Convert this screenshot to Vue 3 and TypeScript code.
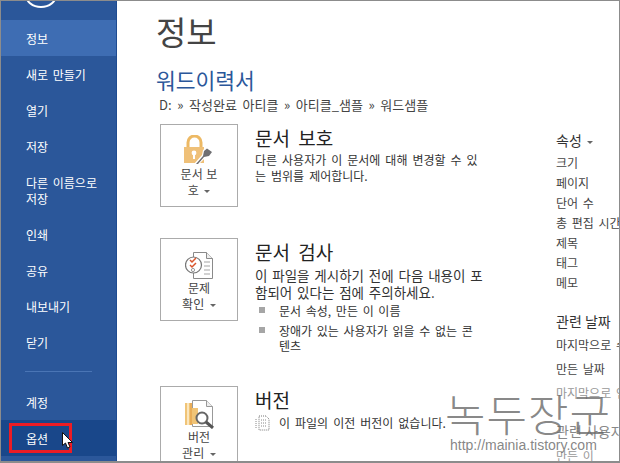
<script setup lang="ts">
const navTop = [
  { label: '정보', active: true },
  { label: '새로 만들기' },
  { label: '열기' },
  { label: '저장' },
  { label: '다른 이름으로\n저장', tall: true },
  { label: '인쇄' },
  { label: '공유' },
  { label: '내보내기' },
  { label: '닫기' },
]
const props1 = ['크기', '페이지', '단어 수', '총 편집 시간', '제목', '태그', '메모']
</script>

<template>
  <div class="frame">
    <aside class="side">
      <div class="logo-zone"><span class="back"></span></div>
      <a
        v-for="n in navTop"
        :key="n.label"
        :class="['nav', { active: n.active, tall: n.tall }]"
      >{{ n.label }}</a>
      <div class="rule"></div>
      <a class="nav">계정</a>
      <a class="nav hover">
        옵션
        <span class="redbox"></span>
        <svg class="cursor" width="11" height="17" viewBox="0 0 11 17">
          <path d="M.5.5v13l3-2.500 2 5 2.500-1-2-4.500h4.500z" fill="#fff" stroke="#111" stroke-width="1" />
        </svg>
      </a>
    </aside>

    <main class="main">
      <h1 class="title">정보</h1>
      <div class="doc">워드이력서</div>
      <div class="path">D: » 작성완료 아티클 » 아티클_샘플 » 워드샘플</div>

      <div class="columns">
        <div class="center">
          <section class="block first">
            <button class="tile">
              <svg class="ico" width="30" height="30" viewBox="0 0 30 30">
                <path d="M4 13V7.500a6.500 6.500 0 0 1 13 0V13" fill="none" stroke="#edb964" stroke-width="3" />
                <rect x="0" y="12" width="20" height="16" fill="#efc078" />
                <circle cx="10" cy="18" r="2.400" fill="#fff" />
                <rect x="9" y="18" width="2" height="6" fill="#fff" />
                <path d="M10 29l8-9 1-5 4-3 6 5-3 5-5 1-7 7z" fill="#fff" />
                <path d="M12 29l7-8 1-5 3-2.500 5 3.500-3 4-5 1-6 7z" fill="#6f6f72" />
              </svg>
              <span>문서 보<br />호 <i class="caret"></i></span>
            </button>
            <div class="text">
              <h2>문서 보호</h2>
              <p>다른 사용자가 이 문서에 대해 변경할 수 있<br />는 범위를 제어합니다.</p>
            </div>
          </section>

          <section class="block second">
            <button class="tile">
              <svg class="ico" width="29" height="27" viewBox="0 0 29 27">
                <path d="M8.500.5h13l6 6v20h-19z" fill="#fff" stroke="#8a8a8a" />
                <path d="M21.500.5v6h6" fill="#eee" stroke="#8a8a8a" />
                <path d="M19 10h6M19 14h6M19 18h6M19 22h6" stroke="#a5a5a5" />
                <circle cx="8.500" cy="13" r="8" fill="#fff" stroke="#777" stroke-width="1.200" />
                <path d="M5 8l2 2 4-4M5 13l2 2 4-4" fill="none" stroke="#d9542b" stroke-width="1.500" />
                <circle cx="8" cy="18" r="1.600" fill="none" stroke="#999" />
              </svg>
              <span>문제<br />확인 <i class="caret"></i></span>
            </button>
            <div class="text">
              <h2>문서 검사</h2>
              <p class="big">이 파일을 게시하기 전에 다음 내용이 포<br />함되어 있다는 점에 주의하세요.</p>
              <ul>
                <li>문서 속성, 만든 이 이름</li>
                <li>장애가 있는 사용자가 읽을 수 없는 콘<br />텐츠</li>
              </ul>
            </div>
          </section>

          <section class="block third">
            <button class="tile">
              <svg class="ico" width="29" height="29" viewBox="0 0 29 29">
                <rect x="0" y="3" width="12" height="22" fill="#f0c477" />
                <rect x="2" y="3" width="2" height="22" fill="#fbe6bd" />
                <rect x="5" y="3" width="2" height="22" fill="#e9ad58" />
                <path d="M7.500.5h14l6 6v20h-20z" fill="#fff" stroke="#999" />
                <path d="M21.500.5v6h6" fill="#eee" stroke="#999" />
                <rect x="7" y="8" width="6" height="16" fill="#f0c477" />
                <circle cx="17" cy="18" r="5.500" fill="#fff" stroke="#666" stroke-width="2" />
                <path d="M21 22l7 6" stroke="#555" stroke-width="3" />
              </svg>
              <span>버전<br />관리 <i class="caret"></i></span>
            </button>
            <div class="text">
              <h2>버전</h2>
              <p class="ver">
                <svg width="16" height="16" viewBox="0 0 16 16">
                  <path d="M4 1h7l3 3v11H4z" fill="#fff" stroke="#777" stroke-dasharray="1 1" />
                  <path d="M6 5h6M6 8h6M6 11h6M1 4v10" stroke="#888" stroke-dasharray="1 1" />
                </svg>
                이 파일의 이전 버전이 없습니다.
              </p>
            </div>
          </section>
        </div>

        <div class="right">
          <h3>속성 <i class="caret"></i></h3>
          <div v-for="p in props1" :key="p" class="prop">{{ p }}</div>
          <h3 class="related">관련 날짜</h3>
          <div class="prop date">마지막으로 수정한 날짜</div>
          <div class="prop date">만든 날짜</div>
          <div class="prop date fade">마지막으로 인쇄한 날짜</div>
          <h3 class="people">관련 사용자</h3>
          <div class="prop fade">만든 이</div>
        </div>
      </div>
    </main>

    <div class="stamp">
      <span class="stamp-big">녹두장군</span>
      <span class="stamp-url">http://mainia.tistory.com</span>
    </div>
  </div>
</template>

<style>
html, body { margin: 0; background: #fff; overflow: hidden; }
</style>

<style scoped>
.frame {
  position: relative;
  display: flex;
  width: 620px;
  height: 463px;
  box-sizing: border-box;
  overflow: hidden;
  background: #fff;
  border: 1px solid #8c8c8c;
  border-bottom-width: 2px;
  font-family: "Noto Sans CJK KR", "Liberation Sans", sans-serif;
  color: #333;
}
.side {
  flex: 0 0 116px;
  display: flex;
  flex-direction: column;
  box-sizing: border-box;
  background: #2b579a;
  border-right: 1px solid #1e4b91;
  color: #fff;
}
.logo-zone { height: 19px; position: relative; overflow: hidden; flex: none; }
.back {
  position: absolute;
  left: 24px;
  top: -19px;
  width: 28px;
  height: 22px;
  border: 2px solid #fff;
  border-radius: 50%;
}
.nav {
  position: relative;
  display: flex;
  flex: none;
  align-items: center;
  box-sizing: border-box;
  height: 36px;
  padding: 2px 0 0 25px;
  font-size: 12px;
  line-height: 16px;
  word-spacing: 2px;
  white-space: pre-line;
}
.nav.tall { height: 52px; }
.nav.active { background: #3e6db3; }
.nav.hover { background: #19478a; }
.rule { flex: none; height: 1px; margin: 11px 24px 12px; background: #4a75b5; }
.redbox {
  position: absolute;
  left: 8px;
  top: 3px;
  width: 57px;
  height: 24px;
  border: 3px solid #ed1c24;
}
.cursor { position: absolute; left: 61px; top: 12px; }

.main { flex: 1; min-width: 0; padding: 6px 0 0 39px; overflow: hidden; }
.title {
  margin: 0;
  height: 48px;
  font-size: 33px;
  line-height: 48px;
  font-weight: 400;
  color: #444;
}
.doc {
  margin-top: 12px;
  height: 26px;
  font-size: 21.500px;
  line-height: 26px;
  color: #2b579a;
}
.path {
  height: 20px;
  margin: 2px 0 0 3px;
  font-size: 13px;
  line-height: 20px;
  word-spacing: 2.700px;
  color: #444;
}
.columns { display: flex; margin-top: 9px; }
.center { flex: 0 0 400px; padding-left: 4px; box-sizing: border-box; }
.block { display: flex; gap: 17px; }
.first { height: 114px; }
.second { height: 148px; }
.third { height: 100px; }
.tile {
  flex: 0 0 78px;
  box-sizing: border-box;
  height: 83px;
  padding: 10px 0 0;
  display: flex;
  flex-direction: column;
  align-items: center;
  gap: 1px;
  background: #fff;
  border: 1px solid #ababab;
  font: inherit;
  font-size: 12px;
  line-height: 16px;
  word-spacing: 1px;
  color: #444;
  text-align: center;
}
.second .tile { padding-top: 13px; gap: 1px; }
.third .tile { height: 100px; padding-top: 13px; gap: 0; }
.ico { flex: none; }
.caret {
  display: inline-block;
  width: 0;
  height: 0;
  margin: 0 0 2px 2px;
  border: 3px solid transparent;
  border-top: 3px solid #666;
  border-bottom: 0;
}
.text { flex: 1; min-width: 0; }
.text h2 {
  margin: 1px 0 0;
  font-size: 19px;
  line-height: 26px;
  word-spacing: 4px;
  font-weight: 400;
  color: #222;
}
.text p {
  margin: 1px 0 0;
  font-size: 12px;
  line-height: 16px;
  word-spacing: 2.300px;
  color: #333;
  white-space: nowrap;
}
.text p.big {
  margin-top: 2px;
  font-size: 13.500px;
  line-height: 17px;
  word-spacing: 1.800px;
}
.text ul { margin: 2px 0 0; padding: 0; list-style: none; }
.text li {
  position: relative;
  padding-left: 24px;
  font-size: 12px;
  line-height: 15px;
  word-spacing: 2px;
  margin-bottom: 5px;
  white-space: nowrap;
}
.text li::before {
  content: "";
  position: absolute;
  left: 4px;
  top: 4px;
  width: 6px;
  height: 6px;
  background: #a6a6a6;
}
.text p.ver { display: flex; align-items: center; gap: 8px; margin-top: 2px; }
.right { flex: none; width: 100px; white-space: nowrap; }
.right h3 {
  margin: 6px 0 3px;
  font-size: 14px;
  line-height: 20px;
  font-weight: 400;
  color: #333;
}
.prop {
  font-size: 12px;
  line-height: 20px;
  word-spacing: 2px;
  color: #444;
}
.prop.date { line-height: 24px; }
.prop.fade { color: #999; }
.right .related { margin: 18px 0 2px; }
.right .people { margin: 16px 0 5px; color: #888; }

.stamp {
  position: absolute;
  left: 444px;
  top: 389px;
  width: 175px;
  display: flex;
  flex-direction: column;
  align-items: flex-start;
  pointer-events: none;
}
.stamp-big {
  font-size: 44px;
  line-height: 46px;
  font-weight: 300;
  letter-spacing: 1px;
  color: rgba(105, 105, 105, 0.8);
  white-space: nowrap;
}
.stamp-url {
  margin: 1px 0 0 5px;
  font-family: "Liberation Sans", sans-serif;
  font-size: 14px;
  line-height: 16px;
  color: rgba(120, 120, 120, 0.9);
  white-space: nowrap;
}
</style>
